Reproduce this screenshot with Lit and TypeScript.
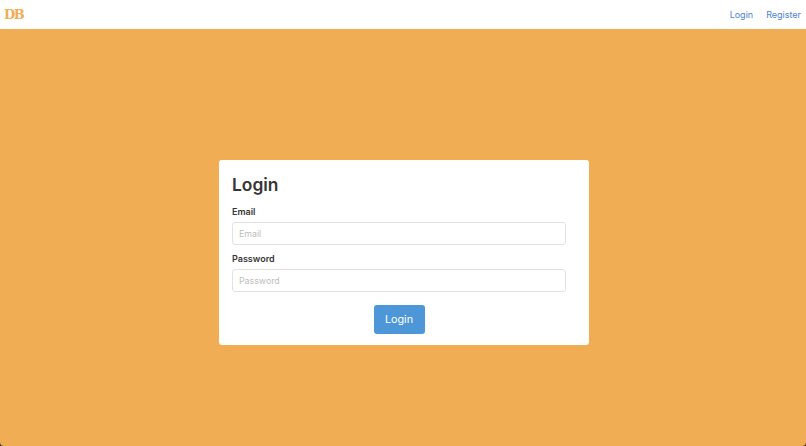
import { LitElement, html, css } from "lit";
import { customElement } from "lit/decorators.js";

@customElement("app-root")
export class AppRoot extends LitElement {
  static styles = css`
    :host { display: flex; flex-direction: column; height: 446px; font-family: Inter, "Liberation Sans", Arial, sans-serif; color: #363636; overflow: hidden; background: #3a3026; }
    .nav { height: 29px; flex: none; background: #fff; display: flex; align-items: center; justify-content: space-between; padding: 0 5px 0 4px; box-sizing: border-box; }
    .logo { font-family: "DejaVu Serif", serif; font-weight: 700; font-size: 13px; letter-spacing: -1.5px; color: #f0ad54; }
    .links { display: flex; gap: 13px; font-size: 9px; color: #4b82d8; }
    .main { flex: 1; background: #f0ad54; display: flex; align-items: center; justify-content: center; padding: 30px 0 0 2px; border-radius: 0 0 4px 4px; }
    .card { width: 370px; height: 185px; background: #fff; border-radius: 3px; box-sizing: border-box; padding: 12px 23px 0 13px; display: flex; flex-direction: column; }
    h1 { margin: 0 0 7px; font-size: 17.4px; line-height: 26px; font-weight: 600; }
    label { font-size: 9px; font-weight: 600; line-height: 14px; display: block; margin-bottom: 3px; }
    .input { height: 23px; border: 1px solid #e2e2e2; border-radius: 3px; box-sizing: border-box; margin-bottom: 7px; padding: 0 6px; font-size: 8.8px; color: #bdbdbd; display: flex; align-items: center; }
    .btn { align-self: center; margin-top: 6px; width: 51px; height: 29px; background: #4d97d8; color: #fff; border-radius: 3px; font-size: 10.8px; display: flex; align-items: center; justify-content: center; }
  `;
  render() {
    return html`
      <div class="nav"><span class="logo">DB</span><div class="links"><span>Login</span><span>Register</span></div></div>
      <div class="main"><div class="card">
        <h1>Login</h1>
        <label>Email</label><div class="input">Email</div>
        <label>Password</label><div class="input">Password</div>
        <div class="btn">Login</div>
      </div></div>`;
  }
}
